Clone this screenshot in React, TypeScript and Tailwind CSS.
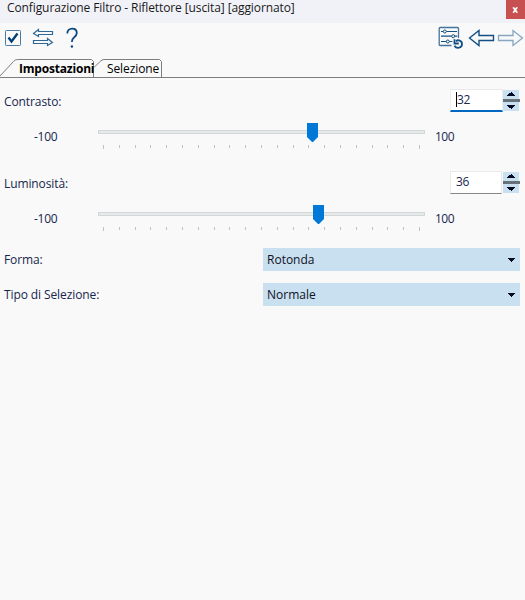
import React from "react";

function SliderBlock({ label, value, percentLeft, focused }: { label: string; value: string; percentLeft: number; focused?: boolean }) {
  const ticks = Array.from({ length: 21 }, (_, i) => Math.round(5 + i * 15.8));
  return (
    <section className="h-[82px] w-full">
      <div className="flex h-[26px] items-start justify-between pl-1 pr-[5px]">
        <label className="mt-[5px] leading-4 tracking-[-0.1px]">{label}</label>
        <div className="flex items-start">
          <div
            className={
              focused
                ? "flex h-[23px] w-[53px] items-center border-x border-t border-b-2 border-x-[#eeeeee] border-t-[#e9e9e9] border-b-[#0067c0] bg-white pl-[5px]"
                : "mr-px flex h-[23px] w-[52px] items-center border border-[#e9e9e9] border-b-[#868686] bg-white pl-[4px]"
            }
          >
            <span className={focused ? "-mt-px border-l border-black leading-[15px] tracking-[-0.4px]" : "-mt-px pl-px leading-4 tracking-[-0.4px]"}>
              {value}
            </span>
          </div>
          <svg width="17" height="21" viewBox="0 0 17 21" className="mt-px" shapeRendering="crispEdges">
            <path d="M0 0h16v21H0z" fill="#c8e0ef" />
            <path d="M0 9h17v3H0z" fill="#68727a" />
            <path d="M8 2h1v1h1v1h1v1h1v1H4V5h1V4h1V3h2zM4 15h8v1h-1v1h-1v1H9v1H8v-1H6v-1H5v-1H4z" fill="#050b24" />
          </svg>
        </div>
      </div>
      <div className="flex h-[40px] pt-[8px]">
        <span className="mt-[6px] w-[98px] pl-[34px] leading-4 tracking-[-0.25px]">-100</span>
        <svg width="327" height="28" viewBox="0 0 327 28" shapeRendering="crispEdges">
          <path d="M.5 7.5h326v3H.5z" fill="#e7eaea" stroke="#d3d7d7" />
          {ticks.map((x, i) => (
            <path key={x} d={`M${x} 22h1v${i === 0 || i === 20 ? 4 : 3}h-1z`} fill="#c2c2c2" />
          ))}
          <path transform={`translate(${percentLeft} 0)`} d="M0 0h11v14l-5 5h-1l-5-5z" fill="#0078d7" shapeRendering="auto" />
        </svg>
        <span className="mt-[6px] pl-[10px] leading-4 tracking-[-0.5px]">100</span>
      </div>
    </section>
  );
}

function SelectRow({ label, value }: { label: string; value: string }) {
  return (
    <div className="flex h-[23px] items-center pl-1">
      <span className="w-[259px] leading-4 tracking-[-0.1px]">{label}</span>
      <div className="flex h-[23px] w-[257px] items-center justify-between bg-[#c8e0ef] pl-1 pr-[5px] text-[#111126]">
        <span className="leading-4">{value}</span>
        <svg width="7" height="4" viewBox="0 0 7 4" shapeRendering="crispEdges" className="mt-px">
          <path d="M0 0h7v1H6v1H5v1H4v1H3V3H2V2H1V1H0z" fill="#050b24" />
        </svg>
      </div>
    </div>
  );
}

export default function App() {
  return (
    <main className="flex h-[600px] w-[525px] flex-col overflow-hidden bg-[#f9f9f9] font-['Open_Sans','Noto_Sans',sans-serif] text-[12px] text-[#17264d]">
      <header className="flex h-[23px] items-start justify-between bg-[#f1f2f8] text-[#191919]">
        <h1 className="whitespace-nowrap pl-[7px] leading-4 tracking-[-0.1px]">Configurazione Filtro - Riflettore [uscita] [aggiornato]</h1>
        <button className="flex h-[19px] w-[19px] items-center justify-center bg-[#c75050]" aria-label="Chiudi">
          <svg width="7" height="6" viewBox="0 0 7 6">
            <path d="M1.2.3l4 5.4M5.2.3l-4 5.4" stroke="white" strokeWidth="1.7" />
          </svg>
        </button>
      </header>

      <nav className="flex h-[35px] items-start justify-between">
        <svg width="90" height="35" viewBox="0 0 90 35" fill="none" stroke="#0b4a80">
          <rect x="5.5" y="7.5" width="15" height="15" rx=".8" stroke="#4a7ba5" />
          <path d="M8.5 14.5l3 4 6-8" stroke="#003e75" strokeWidth="2.3" />
          <path d="M33.5 10.5l5-4v2h14v3h-14v2zM52.5 19.5l-5-4v2h-14v3h14v2z" stroke="#2e6897" strokeWidth="1.2" />
          <path d="M67.3 10.5c0-3.2 2-4.9 4.9-4.9s4.6 1.8 4.6 4.4c0 2.2-1.2 3.2-2.8 4.5-1.6 1.2-2.1 2.1-2.1 4.5" strokeWidth="1.8" />
          <circle cx="71.9" cy="23.5" r="1.2" fill="#0b4a80" stroke="none" />
        </svg>
        <svg width="88" height="35" viewBox="437 23 88 35" fill="none" stroke="#124f83">
          <path d="M451.5 45.5h-11.3q-1 0-1-1V28.5q0-1 1-1h17.3q1 0 1 1V38" stroke="#44749d" strokeWidth="1.3" />
          <path d="M441 31.5h2.2m3.2 0H457M441 36.2h10.5m3.2 0h2.5M441 41.5h5.2m3.2 0h3" strokeWidth="1.2" />
          <circle cx="444.8" cy="31.5" r="1.5" />
          <circle cx="453.2" cy="36.2" r="1.5" />
          <circle cx="447.8" cy="41.5" r="1.5" />
          <path d="M456 41.3c2-2 6-.8 6 2.6 0 4.2-5.4 5.3-7.6 1.8" strokeWidth="1.8" />
          <path d="M454.5 39.2v4.3h4.3" strokeWidth="1.8" />
          <path d="M469.5 38l9.5-7.5v5h14.5v5H479v5z" strokeWidth="1.4" />
          <path d="M522.5 38l-9.5-7.5v5h-14.5v5H513v5z" stroke="#86a6c1" strokeWidth="1.3" />
        </svg>
      </nav>

      <div className="relative flex h-5 items-start text-black">
        <svg width="525" height="20" viewBox="0 0 525 20" className="absolute inset-0" fill="none" stroke="#7d7d7d">
          <path d="M0 19.5h525" />
          <path d="M0 18L13.5 3.5q1.5-2 4-2H91.5l2 2v16M94 9.5l6-6q2-2 4-2h55.5l2 2v16" />
        </svg>
        <span className="relative mt-[3px] w-[88px] pl-[19px] font-bold leading-4 tracking-[-0.2px]">Impostazioni</span>
        <span className="relative mt-[3px] pl-[19px] leading-4 tracking-[-0.1px]">Selezione</span>
      </div>

      <div className="flex flex-col pt-[11px]">
        <SliderBlock label="Contrasto:" value="32" percentLeft={209} focused />
        <SliderBlock label="Luminosità:" value="36" percentLeft={215} />
      </div>
      <div className="flex flex-col gap-3 pt-[-5px] -mt-[5px]">
        <SelectRow label="Forma:" value="Rotonda" />
        <SelectRow label="Tipo di Selezione:" value="Normale" />
      </div>
    </main>
  );
}
